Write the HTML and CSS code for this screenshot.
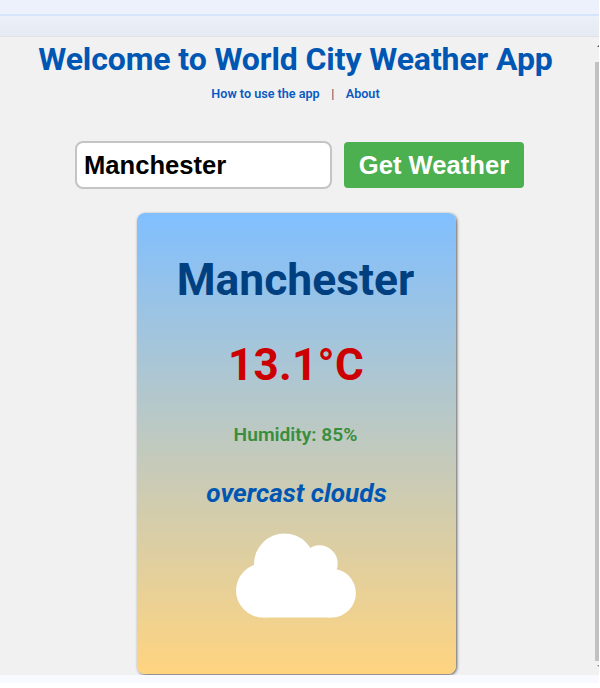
FILE: index.html
```html
<!DOCTYPE html>
<html lang="en">
<head>
<meta charset="utf-8">
<title>World City Weather App</title>
<link rel="stylesheet" href="styles.css">
</head>
<body>
<div class="window">
  <div class="tabstrip"></div>
  <div class="toolbar"></div>
  <div class="viewport">
    <main class="page">
      <h1 class="title">Welcome to World City Weather App</h1>
      <nav class="links"><a>How to use the app</a><span class="divider">|</span><a>About</a></nav>
      <form class="search">
        <input class="city-input" type="text" value="Manchester" aria-label="City">
        <button class="submit" type="button">Get Weather</button>
      </form>
      <section class="card">
        <h2 class="city">Manchester</h2>
        <p class="temp">13.1°C</p>
        <p class="humidity">Humidity: 85%</p>
        <p class="description">overcast clouds</p>
        <svg class="cloud" viewBox="0 0 120 85" aria-hidden="true">
          <circle cx="27" cy="57.5" r="27"/>
          <circle cx="48.5" cy="31" r="30.5"/>
          <circle cx="83.5" cy="30.5" r="18.2"/>
          <circle cx="95.5" cy="60.1" r="24.4"/>
          <path d="M27 40h68v44.5H27z"/>
        </svg>
      </section>
    </main>
    <div class="scrollbar">
      <svg class="arrow" viewBox="0 0 8 4"><path d="M4 0l4 4H0z"/></svg>
      <div class="thumb"></div>
      <svg class="arrow down" viewBox="0 0 8 4"><path d="M0 0h8L4 4z"/></svg>
    </div>
  </div>
  <div class="bottom"></div>
</div>
</body>
</html>
```
FILE: styles.css
```css
* { box-sizing: border-box; }
body { margin: 0; background: #fff; font-family: Roboto, sans-serif; }
.window { width: 599px; height: 683px; display: flex; flex-direction: column; overflow: hidden; }
.tabstrip { height: 16px; flex: none; background: #ecf1fb; border-bottom: 2px solid #d7e5fc; }
.toolbar { height: 21px; flex: none; background: linear-gradient(#ebf0f9, #e6eaf2); border-bottom: 1px solid #dfe1e5; }
.viewport { height: 638px; flex: none; display: flex; background: #f1f1f1; overflow: hidden; }
.page { width: 594px; display: flex; flex-direction: column; align-items: center; }
.title { margin: 3px 0 0 -3px; font-size: 32px; line-height: 38px; font-weight: 700; letter-spacing: -0.11px; color: #0056b3; white-space: nowrap; }
.links { display: flex; margin: 8px 0 0 -3px; font-size: 12.6px; line-height: 16px; font-weight: 600; color: #0b5ac2; }
.divider { margin: 0 11.5px; color: #555; font-weight: 400; }
.search { display: flex; align-items: center; gap: 12px; margin: 39px 0 0 5px; }
.city-input { width: 257px; height: 48px; padding: 0 7px; border: 2px solid #c4c4c4; border-radius: 8px; background: #fff; color: #000; font: bold 25.6px "Liberation Sans", sans-serif; }
.submit { width: 180px; height: 46px; padding: 0; border: 0; border-radius: 4px; background: #4caf50; color: #fff; font: bold 25.6px "Liberation Sans", sans-serif; }
.card { flex: none; width: 319px; height: 461px; margin: 24px 0 0 -2px; border-radius: 8px; background: linear-gradient(#80bfff, #ffd480); box-shadow: 1px 1px 3px rgba(0,0,0,.6); display: flex; flex-direction: column; align-items: center; }
.city { margin: 41px 0 0 -1px; font-size: 44.4px; line-height: 52px; font-weight: 700; color: #004080; }
.temp { margin: 33px 0 0; font-size: 44px; line-height: 52px; font-weight: 700; color: #c00; letter-spacing: 0.3px; }
.humidity { margin: 32px 0 0 -1px; font-size: 19.2px; line-height: 24px; font-weight: 600; color: #388e3c; }
.description { margin: 31px 0 0 1px; font-size: 26.2px; line-height: 30px; font-weight: 700; font-style: italic; color: #0056b3; }
.cloud { display: block; width: 120px; height: 85px; margin: 25px 0 0 -1px; fill: #fff; }
.scrollbar { width: 5px; display: flex; flex-direction: column; align-items: flex-start; overflow: hidden; }
.arrow { flex: none; width: 8px; height: 4px; margin: 6px 0 15px 3px; fill: #555; }
.thumb { flex: none; width: 4px; height: 599px; background: #c1c1c1; margin-left: 1px; }
.arrow.down { margin: 4px 0 0 3px; fill: #888; }
.bottom { flex: 1; background: #f8faff; }
```
